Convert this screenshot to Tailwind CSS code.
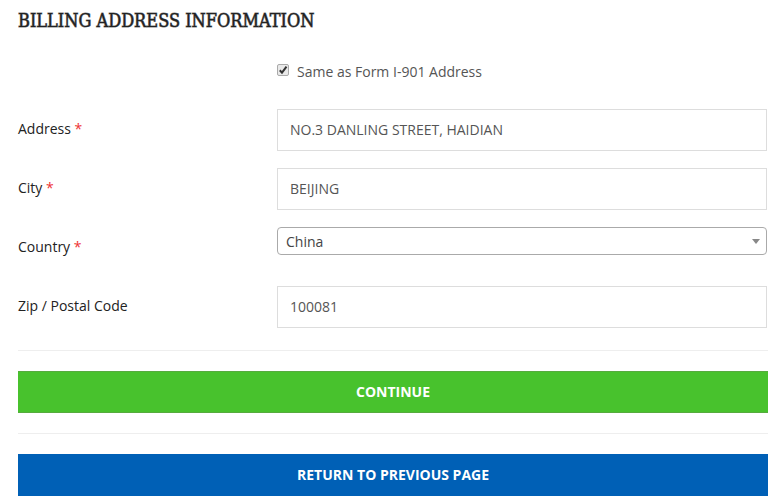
<!DOCTYPE html>
<html lang="en">
<head>
<meta charset="utf-8">
<meta name="viewport" content="width=device-width, initial-scale=1">
<title>Billing Address Information</title>
<script src="https://cdn.jsdelivr.net/npm/@tailwindcss/browser@4"></script>
</head>
<body class="bg-white font-['Open_Sans',sans-serif] text-sm text-[#222]">
<main class="pt-2 pl-[18px] pr-[7px]">
  <h1 class="text-lg leading-[26px] font-normal text-[#222] uppercase [-webkit-text-stroke:1px_#22222299] font-['Roboto_Slab','DejaVu_Serif_Condensed','DejaVu_Serif',serif]">Billing Address Information</h1>
  <form>
    <div class="mt-[26px] grid grid-cols-[259px_1fr]">
      <label class="col-start-2 flex items-start gap-2 leading-6 text-[#555]">
        <span class="relative mt-1 flex size-3">
          <input type="checkbox" checked class="peer size-3 appearance-none rounded-xs border border-[#aaa] bg-[#e9e9e9]">
          <svg class="pointer-events-none absolute inset-0 hidden size-3 peer-checked:block" viewBox="0 0 12 12" fill="none" stroke="#333" stroke-width="2"><path d="M2.8 6.2 5 8.6 9.5 2.6"/></svg>
        </span>
        <span>Same as Form I-901 Address</span>
      </label>
    </div>
    <div class="mt-[25px] grid grid-cols-[259px_1fr] gap-y-[17px] pr-px">
      <label for="address" class="pt-2 leading-6">Address <span class="text-[#e33]">*</span></label>
      <input id="address" value="NO.3 DANLING STREET, HAIDIAN" class="h-[42px] w-full border border-[#ddd] px-3 pb-0.5 text-[#555] outline-none">
      <label for="city" class="pt-2 leading-6">City <span class="text-[#e33]">*</span></label>
      <input id="city" value="BEIJING" class="h-[42px] w-full border border-[#ddd] px-3 pb-0.5 text-[#555] outline-none">
      <label for="country" class="pt-2 leading-6">Country <span class="text-[#e33]">*</span></label>
      <div class="relative h-[42px]">
        <select id="country" class="h-7 w-full appearance-none rounded border border-[#aaa] bg-white px-2 pt-0.5 text-[#444] outline-none"><option>China</option></select>
        <svg class="pointer-events-none absolute top-3 right-[7px] h-[5px] w-2" viewBox="0 0 8 5" fill="#888"><path d="M0 0h8L4 5z"/></svg>
      </div>
      <label for="zip" class="pt-2 leading-6">Zip / Postal Code</label>
      <input id="zip" value="100081" class="h-[42px] w-full border border-[#ddd] px-3 pb-0.5 text-[#555] outline-none">
    </div>
    <hr class="mt-[22px] mb-5 border-[#eee]">
    <button type="submit" class="block h-[42px] w-full border-y border-[#56ab3e] bg-[#48c22d] font-bold text-white uppercase">Continue</button>
    <hr class="my-5 border-[#eee]">
    <button type="button" class="block h-[42px] w-full bg-[#0060b6] font-bold text-white uppercase">Return to previous page</button>
  </form>
</main>
</body>
</html>
